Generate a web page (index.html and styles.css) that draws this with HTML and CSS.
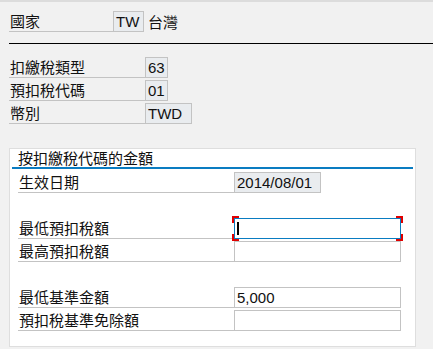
FILE: index.html
```html
<!DOCTYPE html>
<html lang="zh-Hant">
<head>
<meta charset="utf-8">
<title>預扣稅代碼</title>
<link rel="stylesheet" href="styles.css">
</head>
<body>
<div class="topbar"></div>
<main class="page">
  <div class="row country">
    <span class="label lw-country">國家</span>
    <span class="box ro w-tw">TW</span>
    <span class="desc">台灣</span>
  </div>
  <div class="sep"></div>
  <div class="group">
    <div class="row">
      <span class="label lw-head">扣繳稅類型</span>
      <span class="box ro w-2">63</span>
    </div>
    <div class="row">
      <span class="label lw-head">預扣稅代碼</span>
      <span class="box ro w-2">01</span>
    </div>
    <div class="row">
      <span class="label lw-head">幣別</span>
      <span class="box ro w-cur">TWD</span>
    </div>
  </div>
  <section class="panel">
    <div class="panel-title">按扣繳稅代碼的金額</div>
    <div class="panel-body">
      <div class="row">
        <span class="label lw-panel">生效日期</span>
        <span class="box ro w-date">2014/08/01</span>
      </div>
      <div class="row blank"></div>
      <div class="row">
        <span class="label lw-panel">最低預扣稅額</span>
        <span class="box edit focus w-amt"><span class="caret"></span><span class="corner tl"></span><span class="corner tr"></span><span class="corner bl"></span><span class="corner br"></span></span>
      </div>
      <div class="row">
        <span class="label lw-panel">最高預扣稅額</span>
        <span class="box edit w-amt"></span>
      </div>
      <div class="row blank"></div>
      <div class="row">
        <span class="label lw-panel">最低基準金額</span>
        <span class="box edit w-amt">5,000</span>
      </div>
      <div class="row">
        <span class="label lw-panel">預扣稅基準免除額</span>
        <span class="box edit w-amt"></span>
      </div>
    </div>
  </section>
</main>
</body>
</html>
```

FILE: styles.css
```css
html, body {
  margin: 0;
  padding: 0;
}
body {
  background: #f1f1f1;
  font-family: "Noto Sans CJK TC", "Liberation Sans", sans-serif;
  font-size: 15px;
  color: #111;
  width: 433px;
  height: 349px;
  overflow: hidden;
}
.topbar {
  height: 2px;
  background: #dcdcdc;
}
.page {
  padding-left: 9px;
  padding-top: 9px;
}
.row {
  display: flex;
  align-items: stretch;
  height: 21px;
}
.label {
  box-sizing: border-box;
  border-bottom: 1px solid #c3c3c3;
  line-height: 20px;
  padding-left: 1px;
  white-space: nowrap;
}
.lw-country { width: 104px; }
.lw-head { width: 136px; }
.lw-panel { width: 216px; }
.box {
  box-sizing: border-box;
  height: 21px;
  border: 1px solid #c3c3c3;
  font-family: "Liberation Sans", sans-serif;
  font-size: 15px;
  line-height: 19px;
  padding-left: 2px;
  position: relative;
}
.ro { background: #e9ecef; }
.edit { background: #fff; }
.w-tw { width: 31px; }
.w-2 { width: 23px; }
.w-cur { width: 47px; }
.w-date { width: 87px; }
.w-amt { width: 167px; }
.desc {
  line-height: 21px;
  padding-left: 4px;
}
.sep {
  margin-top: 11px;
  height: 1px;
  background: #000;
}
.group {
  margin-top: 13px;
  display: flex;
  flex-direction: column;
  gap: 2px;
}
.panel {
  margin-top: 24px;
  width: 407px;
  height: 199px;
  box-sizing: border-box;
  background: #fff;
  border: 1px solid #dedede;
  padding: 0 2px;
}
.panel-title {
  height: 18px;
  line-height: 18px;
  border-bottom: 2px solid #0a7cc1;
  padding-left: 6px;
}
.panel-body {
  padding-left: 6px;
  padding-top: 3px;
  display: flex;
  flex-direction: column;
  gap: 2px;
}
.focus {
  border-color: #0a7cc1;
}
.caret {
  display: block;
  position: absolute;
  left: 2px;
  top: 3px;
  width: 2px;
  height: 13px;
  background: #000;
}
.corner {
  position: absolute;
  width: 5px;
  height: 5px;
  border: 0 solid #e00000;
}
.corner.tl { left: -3px; top: -3px; border-left-width: 2px; border-top-width: 2px; }
.corner.tr { right: -3px; top: -3px; border-right-width: 2px; border-top-width: 2px; }
.corner.bl { left: -3px; bottom: -3px; border-left-width: 2px; border-bottom-width: 2px; }
.corner.br { right: -3px; bottom: -3px; border-right-width: 2px; border-bottom-width: 2px; }
```
